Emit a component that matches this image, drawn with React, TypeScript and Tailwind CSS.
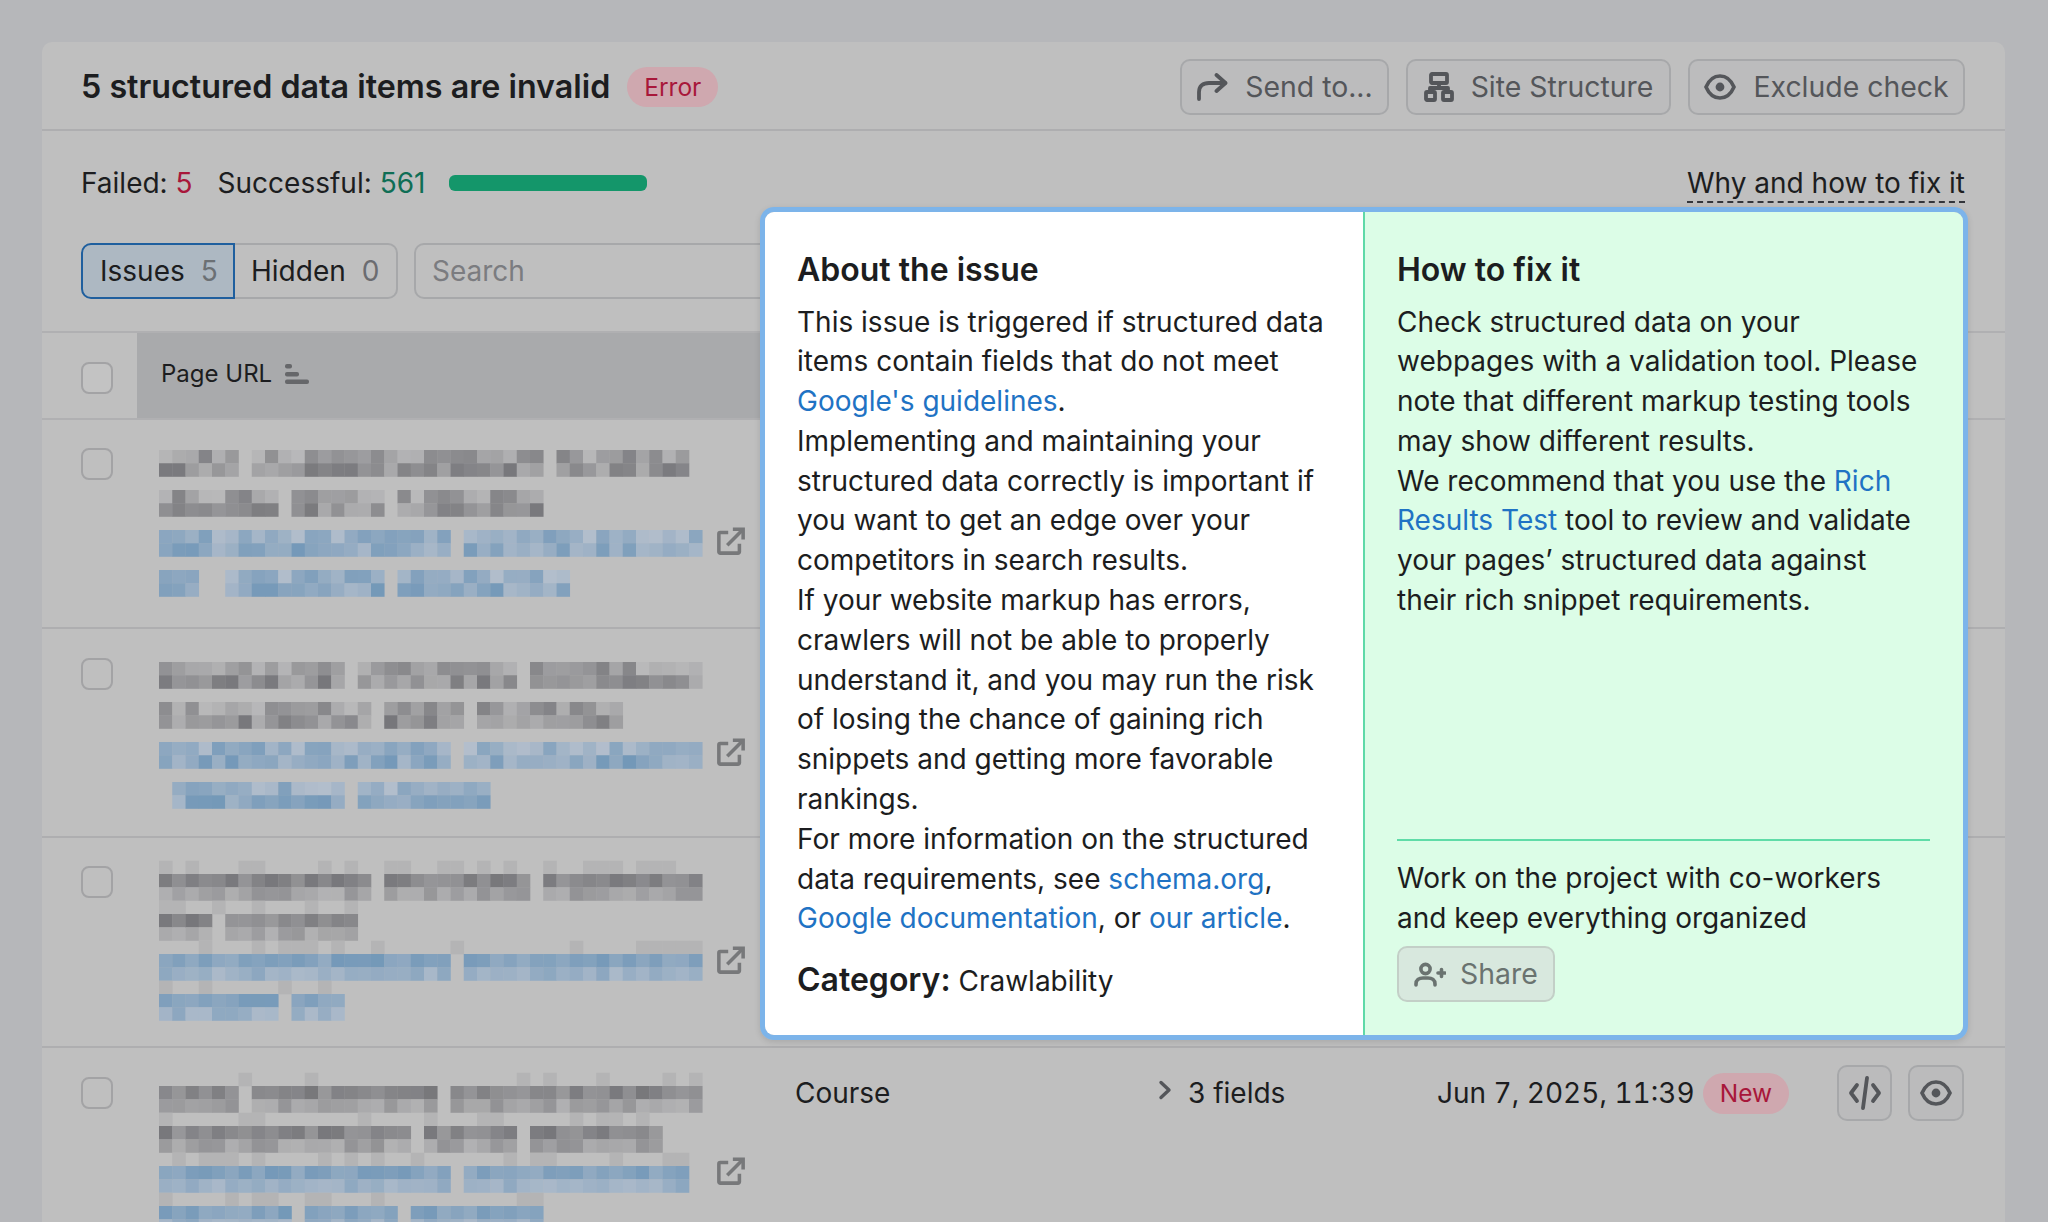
import { ReactNode } from "react"

// seeded noise so the mosaic stays the same on every load
function noise(n: number) {
  const v = Math.sin(n * 127.1 + 311.7) * 43758.5453
  return v - Math.floor(v)
}

const CELL = 13.25

type MosaicLine = { cols: number; gaps: number[]; blue?: boolean; seed: number }

const Mosaic = ({ lines, topDark, className }: { lines: MosaicLine[]; topDark?: boolean; className: string }) => {
  const rects: ReactNode[] = []
  lines.forEach((line, li) => {
    const y = 14 + li * 40
    for (let c = 0; c < line.cols; c++) {
      // faint ascender cells above a line
      if (topDark && noise(line.seed + c * 5.3) > 0.62) {
        rects.push(<rect key={`${li}-${c}-a`} x={c * CELL} y={y - CELL} width={CELL + 0.3} height={CELL + 0.3} fill="#b4b4b5" />)
      }
      if (line.gaps.includes(c)) continue
      for (let r = 0; r < 2; r++) {
        const t = noise(line.seed + c * 3.1 + r * 17.7)
        const base = topDark ? (r === 0 ? 0.72 : 0.38) : r === 0 ? 0.42 : 0.58
        const mix = base + (t - 0.5) * (topDark ? 0.45 : 0.75)
        const fill = line.blue
          ? `rgb(${Math.round(182 - mix * 70)},${Math.round(192 - mix * 42)},${Math.round(205 - mix * 22)})`
          : `rgb(${Math.round(190 - mix * 75)},${Math.round(190 - mix * 75)},${Math.round(191 - mix * 72)})`
        rects.push(<rect key={`${li}-${c}-${r}`} x={c * CELL} y={y + r * CELL} width={CELL + 0.3} height={CELL + 0.3} fill={fill} />)
      }
    }
  })
  return (
    <svg width="558" height="180" className={`shrink-0 blur-[0.5px] ${className}`}>
      {rects}
    </svg>
  )
}

const ExternalIcon = ({ className }: { className: string }) => (
  <svg width="28" height="28" viewBox="0 0 30 30" fill="none" stroke="#77787a" strokeWidth="3.8" className={`shrink-0 ${className}`}>
    <path d="M12 6H3.5a1.5 1.5 0 0 0-1.5 1.5V26.5a1.5 1.5 0 0 0 1.5 1.5H22.5a1.5 1.5 0 0 0 1.5-1.5V18" />
    <path d="M11 19.5L27 3.5" />
    <path d="M17 2.5h11v11" />
  </svg>
)

const EyeIcon = () => (
  <svg width="32" height="26" viewBox="0 0 32 26" fill="none" stroke="#54565a" strokeWidth="3.6">
    <path d="M2 13C5 6 10 2 16 2C22 2 27 6 30 13C27 20 22 24 16 24C10 24 5 20 2 13Z" />
    <circle cx="16" cy="13" r="4.4" fill="#54565a" stroke="none" />
  </svg>
)

const A = ({ children }: { children: ReactNode }) => <span className="text-[#1f73c4]">{children}</span>

const HeaderButton = ({ icon, label, width }: { icon: ReactNode; label: string; width: string }) => (
  <div className={`flex h-[56px] items-center justify-center gap-[17px] rounded-[10px] border-2 border-[#a7a8aa] bg-[#bcbcbd] text-[28.4px] text-[#54565a] ${width}`}>
    {icon}
    <span>{label}</span>
  </div>
)

const rows = [
  {
    height: "h-[209px]",
    checkTop: "mt-[28px]",
    mosaicTop: "mt-[16px]",
    iconTop: "mt-[107px]",
    lines: [
      { cols: 40, gaps: [6, 29], seed: 1 },
      { cols: 29, gaps: [9, 17], seed: 40 },
      { cols: 41, gaps: [22], blue: true, seed: 90 },
      { cols: 31, gaps: [3, 4, 17], blue: true, seed: 130 },
    ],
  },
  {
    height: "h-[209px]",
    checkTop: "mt-[29px]",
    mosaicTop: "mt-[19px]",
    iconTop: "mt-[109px]",
    lines: [
      { cols: 41, gaps: [14, 27], seed: 170 },
      { cols: 35, gaps: [16, 23], seed: 210 },
      { cols: 41, gaps: [22], blue: true, seed: 250 },
      { cols: 25, gaps: [0, 14], blue: true, seed: 290 },
    ],
  },
  {
    height: "h-[210px]",
    checkTop: "mt-[28px]",
    mosaicTop: "mt-[22px]",
    iconTop: "mt-[108px]",
    topDark: true,
    lines: [
      { cols: 41, gaps: [16, 28], seed: 330 },
      { cols: 15, gaps: [4], seed: 370 },
      { cols: 41, gaps: [22], blue: true, seed: 410 },
      { cols: 14, gaps: [9], blue: true, seed: 450 },
    ],
  },
  {
    height: "h-[210px]",
    checkTop: "mt-[29px]",
    mosaicTop: "mt-[24px]",
    iconTop: "mt-[109px]",
    topDark: true,
    last: true,
    lines: [
      { cols: 41, gaps: [6, 21], seed: 490 },
      { cols: 38, gaps: [19, 27], seed: 530 },
      { cols: 40, gaps: [22], blue: true, seed: 570 },
      { cols: 29, gaps: [10, 18], blue: true, seed: 610 },
    ],
  },
]

const LastRowCells = () => (
  <div className="ml-[50px] flex h-[90px] items-center text-[28px]">
    <div className="w-[363px]">Course</div>
    <div className="flex w-[279px] items-center gap-[16px]">
      <svg width="14" height="20" viewBox="0 0 14 20" fill="none" stroke="#54565a" strokeWidth="3.4" strokeLinecap="round" strokeLinejoin="round" className="-mt-[6px]">
        <path d="M3 2.5L11 10L3 17.5" />
      </svg>
      3 fields
    </div>
    <div className="w-[266px] whitespace-nowrap tabular-nums">Jun 7, 2025, 11:39</div>
    <div className="flex h-[41px] w-[86px] items-center justify-center rounded-full bg-[#cfa8af] text-[24.5px] text-[#a8173a]">New</div>
    <div className="ml-[48px] flex h-[56px] w-[55px] items-center justify-center rounded-[10px] border-2 border-[#a7a8aa] bg-[#bbbbbc]">
      <svg width="34" height="34" viewBox="0 0 34 34" fill="none" stroke="#54565a" strokeWidth="3.8" strokeLinecap="round" strokeLinejoin="round">
        <path d="M9 9L3 17L9 25M25 9L31 17L25 25" />
        <path d="M19 2L15 32" />
      </svg>
    </div>
    <div className="ml-[16px] flex h-[56px] w-[56px] items-center justify-center rounded-[10px] border-2 border-[#a7a8aa] bg-[#bbbbbc]">
      <EyeIcon />
    </div>
  </div>
)

const App = () => {
  return (
    <div className="relative h-[1222px] w-[2048px] overflow-hidden bg-[#b6b7ba] pl-[42px] pt-[42px] font-['Inter',sans-serif] text-[#1c1d20]">
      <div className="h-[1300px] w-[1963px] rounded-t-[10px] bg-[#bfbfbf]">
        {/* title bar */}
        <div className="flex h-[89px] items-center border-b-2 border-[#aeaeb0] pl-[39px] pr-[40px] pt-[3px]">
          <h1 className="pt-[1px] text-[32.25px] font-semibold">5 structured data items are invalid</h1>
          <span className="ml-[17px] flex h-[40px] w-[91px] items-center justify-center rounded-full bg-[#cfa8af] text-[24.5px] text-[#a8173a]">Error</span>
          <div className="ml-auto flex gap-[17px]">
            <HeaderButton
              width="w-[209px]"
              label="Send to..."
              icon={
                <svg width="32" height="28" viewBox="0 0 32 28" fill="none" stroke="#54565a" strokeWidth="3.8" strokeLinecap="round" strokeLinejoin="round">
                  <path d="M3 26V19C3 13 7 10 13 10H29" />
                  <path d="M20.5 2L29.5 10L20.5 18" />
                </svg>
              }
            />
            <HeaderButton
              width="w-[265px]"
              label="Site Structure"
              icon={
                <svg width="30" height="30" viewBox="0 0 30 30" fill="none" stroke="#54565a" strokeWidth="3.8" strokeLinejoin="round">
                  <rect x="7" y="2" width="16" height="9" rx="1" />
                  <path d="M15 11V16M6 21V16H24V21" />
                  <rect x="2" y="20" width="9" height="8" rx="1" />
                  <rect x="19" y="20" width="9" height="8" rx="1" />
                </svg>
              }
            />
            <HeaderButton width="w-[277px]" label="Exclude check" icon={<EyeIcon />} />
          </div>
        </div>

        {/* counters */}
        <div className="flex h-[112px] items-center justify-between pb-[8px] pl-[39px] pr-[40px] text-[28px]">
          <div className="flex items-center">
            <span>
              Failed: <span className="text-[#a8173a]">5</span>
            </span>
            <span className="ml-[25px]">
              Successful: <span className="text-[#0f6e55]">561</span>
            </span>
            <div className="ml-[24px] h-[16px] w-[198px] rounded-[6px] bg-[#14966a]" />
          </div>
          <span className="mt-[1px] border-b-2 border-dashed border-[#33353a] leading-[36px]">Why and how to fix it</span>
        </div>

        {/* filters */}
        <div className="flex pl-[39px] text-[28px]">
          <div className="flex h-[56px]">
            <div className="flex w-[154px] items-center gap-[16px] rounded-l-[10px] border-2 border-[#1f5f9e] bg-[#adb8c2] pl-[17px]">
              Issues <span className="text-[#6b7074]">5</span>
            </div>
            <div className="flex w-[163px] items-center gap-[16px] rounded-r-[10px] border-2 border-l-0 border-[#a7a8aa] pl-[16px]">
              Hidden <span className="text-[#6b6c70]">0</span>
            </div>
          </div>
          <div className="ml-[16px] flex h-[56px] w-[700px] items-center rounded-[10px] border-2 border-[#a7a8aa] pl-[16px] text-[#7b7c80]">Search</div>
        </div>

        {/* table head */}
        <div className="mt-[32px] flex h-[89px] border-y-2 border-[#b0b0b2]">
          <div className="flex w-[95px] items-center pl-[39px] pt-[4px]">
            <div className="h-[32px] w-[32px] rounded-[8px] border-2 border-[#a3a3a5] bg-[#c3c3c3]" />
          </div>
          <div className="flex w-[700px] items-center gap-[13px] bg-[#a9aaac] pb-[4px] pl-[24px] text-[24px]">
            Page URL
            <svg width="24" height="20" viewBox="0 0 24 20" fill="#66676a">
              <rect x="0" y="0" width="7" height="4.5" rx="2" />
              <rect x="0" y="8" width="14" height="4.5" rx="2" />
              <rect x="0" y="15.5" width="24" height="4.5" rx="2" />
            </svg>
          </div>
        </div>

        {/* rows */}
        {rows.map((row, i) => (
          <div key={i} className={`flex border-b-2 border-[#aeaeb0] pl-[39px] ${row.height}`}>
            <div className={`h-[32px] w-[32px] shrink-0 rounded-[8px] border-2 border-[#a3a3a5] ${row.checkTop}`} />
            <Mosaic lines={row.lines} topDark={row.topDark} className={`ml-[46px] ${row.mosaicTop}`} />
            {row.last ? (
              <div className="flex">
                <ExternalIcon className={row.iconTop} />
                <LastRowCells />
              </div>
            ) : (
              <ExternalIcon className={row.iconTop} />
            )}
          </div>
        ))}
      </div>

      {/* popover */}
      <div className="absolute left-[760px] top-[207px] flex h-[833px] w-[1208px] overflow-hidden rounded-[14px] border-[5px] border-[#7cb4ea] text-[28px] leading-[39.8px] shadow-[0_2px_6px_rgba(0,0,0,0.12)]">
        <div className="w-[598px] shrink-0 bg-white pl-[32px] pt-[38px]">
          <h2 className="text-[32px] font-semibold leading-[40px]">About the issue</h2>
          <p className="mt-[12.5px]">
            This issue is triggered if structured data
            <br />
            items contain fields that do not meet
            <br />
            <A>Google's guidelines</A>.
            <br />
            Implementing and maintaining your
            <br />
            structured data correctly is important if
            <br />
            you want to get an edge over your
            <br />
            competitors in search results.
            <br />
            If your website markup has errors,
            <br />
            crawlers will not be able to properly
            <br />
            understand it, and you may run the risk
            <br />
            of losing the chance of gaining rich
            <br />
            snippets and getting more favorable
            <br />
            rankings.
            <br />
            For more information on the structured
            <br />
            data requirements, see <A>schema.org</A>,
            <br />
            <A>Google documentation</A>, or <A>our article</A>.
          </p>
          <p className="mt-[20.5px]">
            <span className="text-[32px] font-semibold">Category:</span> Crawlability
          </p>
        </div>
        <div className="flex flex-1 flex-col border-l-2 border-[#5fd9a8] bg-[#dcfde7] pl-[32px] pr-[33px] pt-[38px]">
          <h2 className="text-[32px] font-semibold leading-[40px]">How to fix it</h2>
          <p className="mt-[12.5px]">
            Check structured data on your
            <br />
            webpages with a validation tool. Please
            <br />
            note that different markup testing tools
            <br />
            may show different results.
            <br />
            We recommend that you use the <A>Rich</A>
            <br />
            <A>Results Test</A> tool to review and validate
            <br />
            your pages’ structured data against
            <br />
            their rich snippet requirements.
          </p>
          <div className="mt-auto border-t-2 border-[#5fdca8] pt-[18px]">
            <p>
              Work on the project with co-workers
              <br />
              and keep everything organized
            </p>
            <div className="mb-[33px] mt-[7px] flex h-[56px] w-[158px] items-center gap-[14px] rounded-[10px] border-2 border-[#c3cfc7] bg-[#d8e8de] pl-[15px] text-[28.4px] text-[#6a7370]">
              <svg width="32" height="25" viewBox="0 0 32 25" fill="none" stroke="#6a7370" strokeWidth="3.6" strokeLinecap="round">
                <circle cx="11.5" cy="7" r="4.6" />
                <path d="M2 23V22C2 18 5 16 9 16H14C18 16 21 18 21 22V23" />
                <path d="M24 11H31M27.5 7.5V14.5" />
              </svg>
              Share
            </div>
          </div>
        </div>
      </div>
    </div>
  )
}

export default App
